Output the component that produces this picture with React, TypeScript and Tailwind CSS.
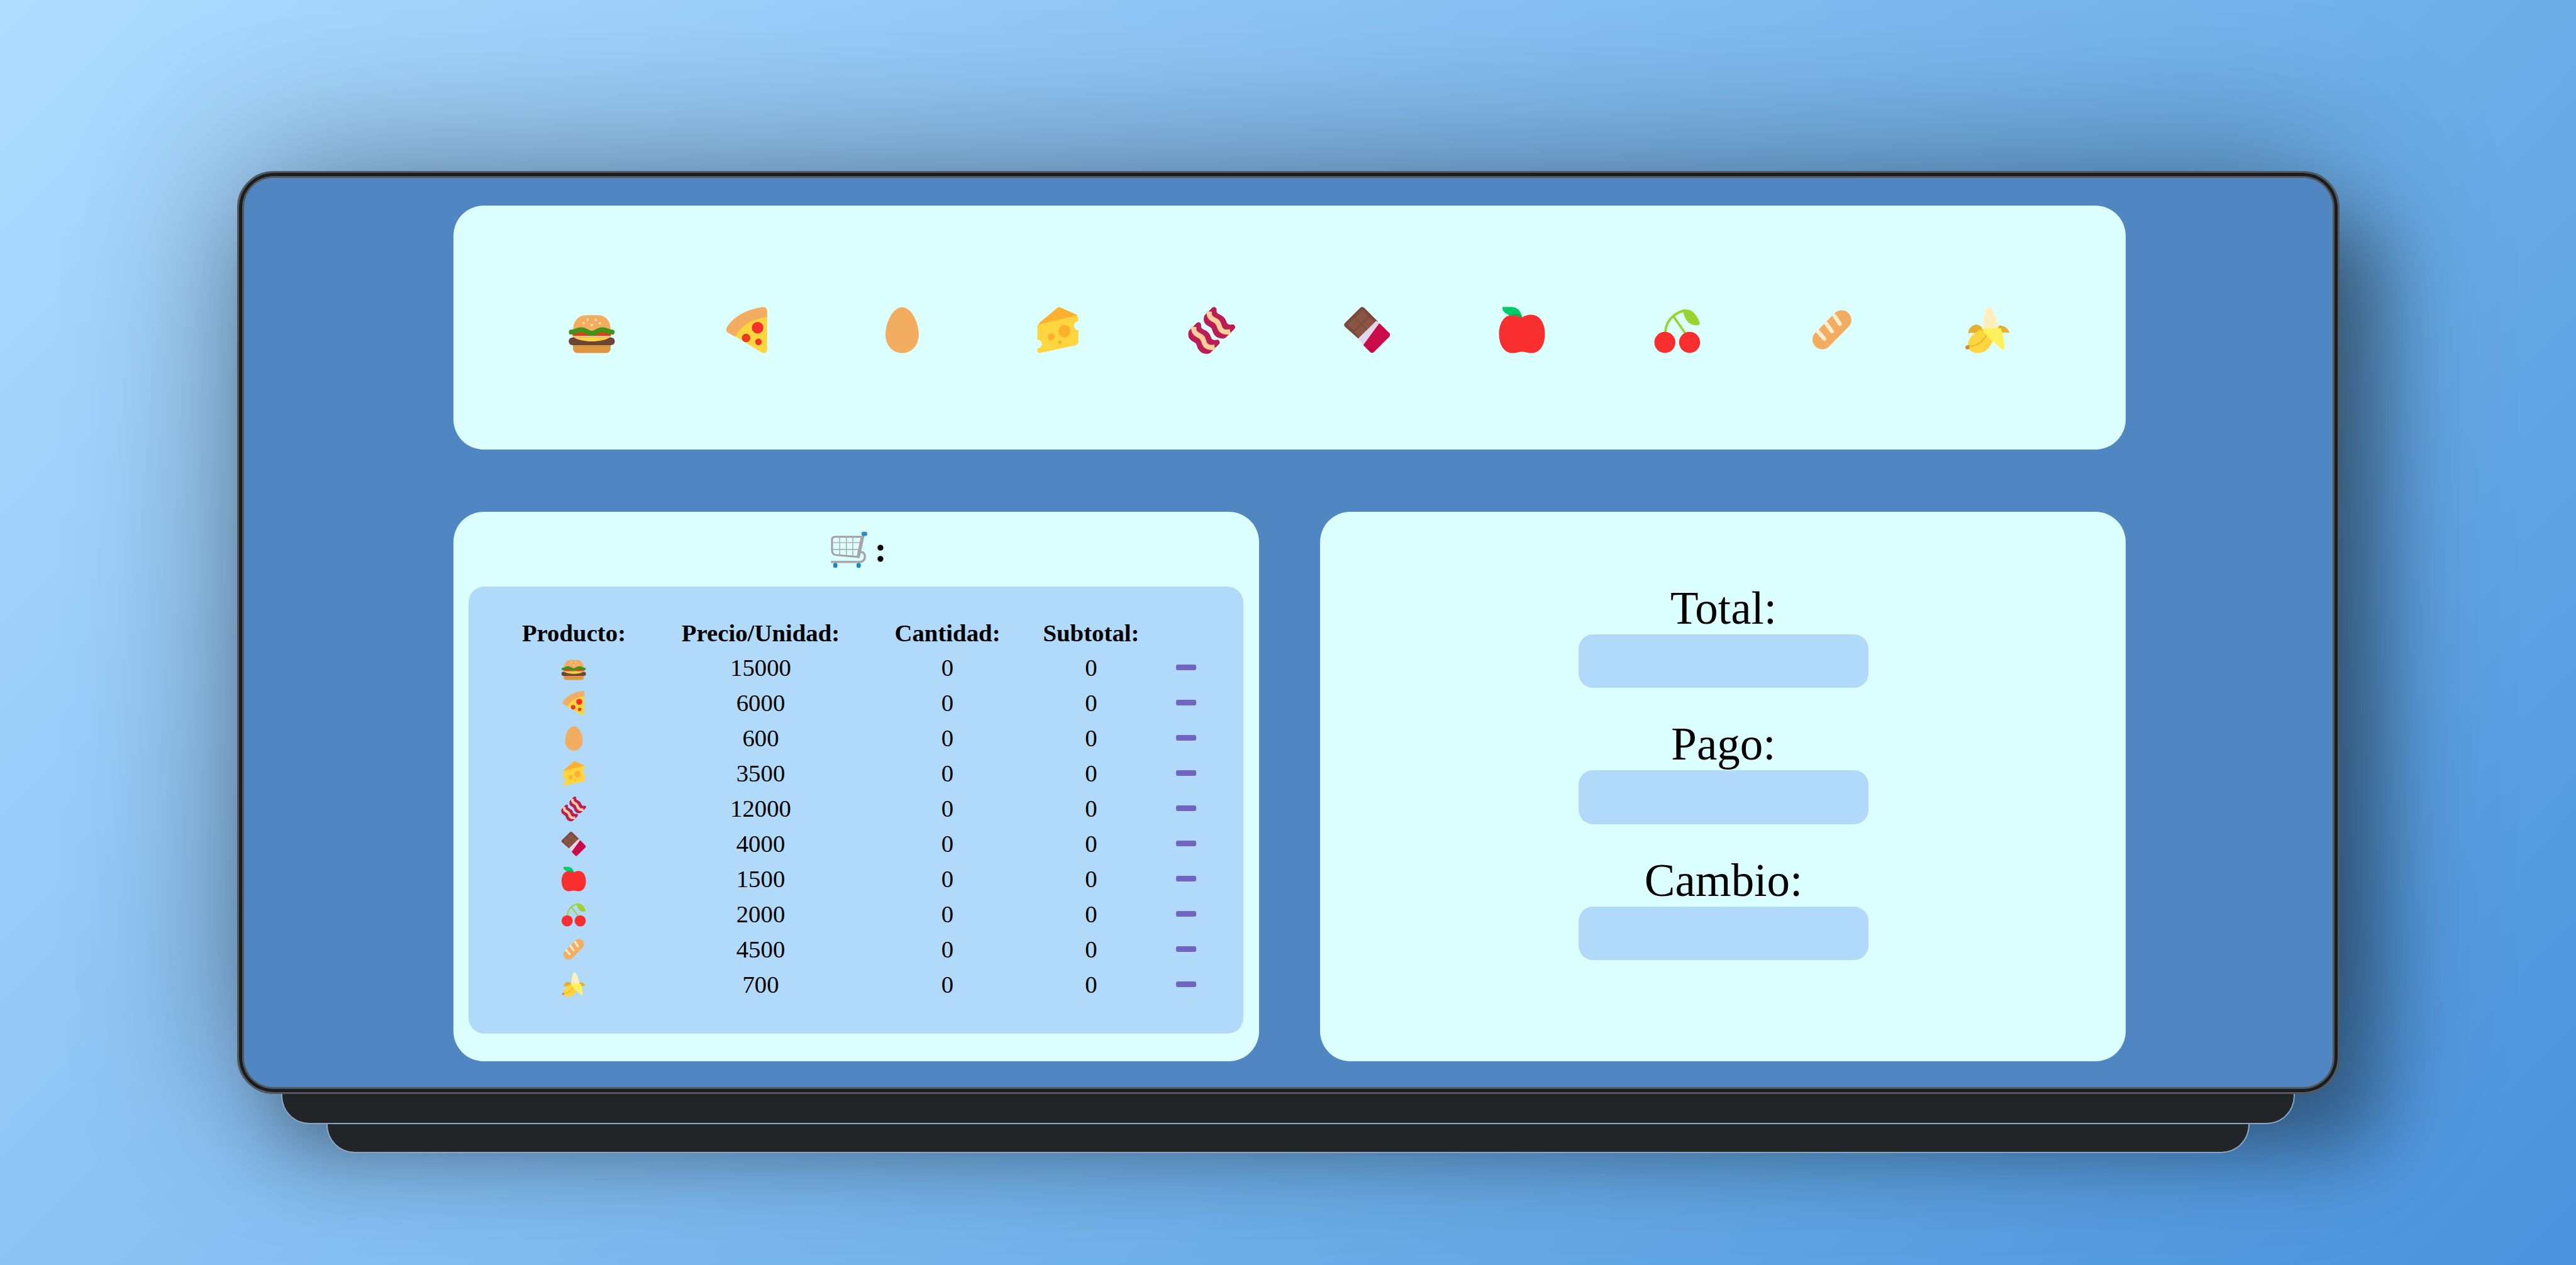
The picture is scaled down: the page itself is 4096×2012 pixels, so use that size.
import React from "react";

type IconProps = { className?: string };

const Svg = ({ className, children }: IconProps & { children: React.ReactNode }) => (
  <svg viewBox="0 0 32 32" className={className} fill="none">
    {children}
  </svg>
);

const Burger = ({ className }: IconProps) => (
  <Svg className={className}>
    <path d="M4.6 24.5H27.5V26.9C27.5 28.6 26.4 30 24.6 30H7.5C5.7 30 4.6 28.6 4.6 26.9Z" fill="#DE9542" />
    <path d="M4.7 15.5C4.7 10.4 8.2 7 12.8 7H19.6C24.2 7 27.5 10.4 27.5 15.5L16 19Z" fill="#F3AD61" />
    <rect x="4.4" y="16.5" width="23.2" height="3.6" fill="#D3451C" />
    <path d="M4.4 19.6H27.6V21.5H4.4Z" fill="#F9C9A0" />
    <rect x="2" y="20.5" width="28" height="4.7" rx="2.3" fill="#6D4534" />
    <path d="M5.3 20.5H26.8C24.5 22 20.6 22.9 16 22.9C11.5 22.9 7.6 22 5.3 20.5Z" fill="#FCD53F" />
    <path
      d="M3.6 17.3C6 17.3 6.5 15.8 9.6 15.8C12.6 15.8 13.3 18 16 18C18.7 18 19.4 15.8 22.4 15.8C25.5 15.8 26 17.3 28.4 17.3"
      stroke="#44911B"
      strokeWidth="3"
      strokeLinecap="round"
    />
    <g fill="#FFDEA7">
      <ellipse cx="13.5" cy="9.8" rx="0.7" ry="0.8" />
      <ellipse cx="18.4" cy="9.8" rx="0.7" ry="0.8" />
      <ellipse cx="11" cy="11.9" rx="0.7" ry="0.8" />
      <ellipse cx="20.9" cy="11.9" rx="0.7" ry="0.8" />
      <ellipse cx="16" cy="13" rx="0.7" ry="0.9" />
    </g>
  </Svg>
);

const Pizza = ({ className }: IconProps) => (
  <Svg className={className}>
    <path d="M8 19.4C11 13.8 18 8.8 28.2 7.8V27.8C28.2 29.7 26.3 30.6 24.7 29.6Z" fill="#FCD53F" />
    <path
      d="M25 2.1C26.8 1.8 28.2 2.9 28.2 4.6V8.1C19.5 9.2 12 13.3 8.8 20.1L4.5 17.7C3.4 17 3 15.8 3.6 14.6C7 8.3 15.6 3.4 25 2.1Z"
      fill="#F3AD61"
    />
    <circle cx="22.4" cy="14.6" r="3.5" fill="#F92F2F" />
    <circle cx="15.4" cy="20.8" r="2.6" fill="#E93B22" />
    <circle cx="22.9" cy="23.2" r="2" fill="#E93B22" />
  </Svg>
);

const Egg = ({ className }: IconProps) => (
  <Svg className={className}>
    <path d="M16.2 2.1C21.8 2.1 26.3 11.4 26.3 18.7C26.3 25.4 21.9 30 16.2 30C10.5 30 6.1 25.4 6.1 18.7C6.1 11.4 10.6 2.1 16.2 2.1Z" fill="#F3AD61" />
  </Svg>
);

const Cheese = ({ className }: IconProps) => (
  <Svg className={className}>
    <path d="M16.2 2.5C16.8 2 17.5 2 18.2 2.4L27.8 6.6L28.5 8.6L4.2 14.2L5 11.8Z" fill="#FFB02E" />
    <path
      d="M4 12.9L28 7.2C28.6 7.8 28.9 8.4 28.9 9.2V10.6C27.2 10.8 26.2 12.2 26.2 13.5C26.2 14.9 27.3 16 28.9 16.2V23C28.9 24.2 28.2 25 27.1 25.3L5.7 29.9C4.7 30.1 3.9 29.5 3.9 28.5V27.2C5.5 27 6.8 25.9 6.8 24.5C6.8 22.9 5.6 22 3.9 21.8Z"
      fill="#FCD53F"
    />
    <ellipse cx="20.4" cy="16.7" rx="3.6" ry="3.8" fill="#FFB02E" />
    <circle cx="12.4" cy="20.1" r="2.2" fill="#FFB02E" />
    <circle cx="17.7" cy="23.4" r="1.1" fill="#FFB02E" />
  </Svg>
);

const BaconStrip = ({ shift }: { shift: string }) => (
  <g transform={shift} strokeLinejoin="round">
    <path
      d="M17.3 3.6C16.9 6.6 18.7 7.4 20.7 8.3C23.2 9.5 22.9 10.8 23.7 12.4C24.7 14.4 26.6 14.6 28.6 14.2L23.4 19.4C21.3 19.9 19.3 19.1 18.3 17.1C17.4 15.2 17.9 13.9 15.4 12.7C13.6 11.8 12 10.8 12.9 8Z"
      fill="#BB1D54"
      stroke="#BB1D54"
      strokeWidth="3.2"
    />
    <path d="M14.5 4.7C14 8.2 16 9.2 18 10.2C20.3 11.3 20 12.6 20.9 14.7C21.9 17 24 17.7 27.2 17" stroke="#FFCE9B" strokeWidth="3.1" />
  </g>
);

const Bacon = ({ className }: IconProps) => (
  <Svg className={className}>
    <BaconStrip shift="translate(0 0)" />
    <BaconStrip shift="translate(-9.4 9.3)" />
  </Svg>
);

const Chocolate = ({ className }: IconProps) => (
  <Svg className={className}>
    <path d="M11.8 2.5Q13 1.5 14.2 2.5L22.6 10.9L10.9 21.5L2.5 14Q1.4 12.8 2.5 11.7Z" fill="#7A4B3A" />
    <g fill="#8C5543" transform="rotate(45 13 2.2)">
      <rect x="14.2" y="3.3" width="5.2" height="6" />
      <rect x="20.2" y="3.3" width="5" height="6" />
      <rect x="14.2" y="10" width="5.2" height="6" />
      <rect x="20.2" y="10" width="5" height="6" />
    </g>
    <path d="M21.5 10.4L23.8 12L14.2 25.4L10.3 21.4Z" fill="#E1D8EC" />
    <path d="M23.4 11.8L29.4 17.8Q30.4 19 29.4 20.1L20.1 29.4Q18.9 30.4 17.8 29.4L13.6 25.2Z" fill="#CA0B4A" />
  </Svg>
);

const Apple = ({ className }: IconProps) => (
  <Svg className={className}>
    <path
      d="M16.1 8.3C17.6 7.4 19.6 6.7 21.6 6.7C26.6 6.7 30 11.5 30 18.4C30 25 26.9 30 22 30C19.6 30 18.2 29.2 16.1 29.2C14 29.2 12.6 30 10.2 30C5.3 30 2.1 25 2.1 18.4C2.1 11.5 5.5 6.7 10.6 6.7C12.6 6.7 14.6 7.4 16.1 8.3Z"
      fill="#F92F2F"
    />
    <path d="M4.7 2H9.6C13.2 2 16 4.8 16 8.6C13.8 7.6 11.3 7 9 7.2C6.4 6.4 4.2 4.8 4.2 2.5C4.2 2.2 4.4 2 4.7 2Z" fill="#00CB6A" />
    <path d="M9 7.2C11.6 6.3 14.3 7.1 16 8.6L15.9 7.6C14 6 11.2 5.8 9 7.2Z" fill="#2E8F45" />
  </Svg>
);

const Cherries = ({ className }: IconProps) => (
  <Svg className={className}>
    <path d="M8.8 17.5C9 11.5 12.6 6.2 20.4 4.1" stroke="#9BD22B" strokeWidth="1.5" strokeLinecap="round" />
    <path d="M14 8.2C15.8 10.8 18.4 14.2 20.6 17.6" stroke="#9BD22B" strokeWidth="1.4" strokeLinecap="round" />
    <path d="M19.4 3.8C24.8 2.6 27.6 6.4 29.5 11.3C29.9 12.4 29.2 13.1 28 13.1C22.4 13.1 20.4 9.3 19.4 3.8Z" fill="#9BD22B" />
    <circle cx="8.5" cy="23.5" r="6.4" fill="#F92F2F" />
    <circle cx="23.5" cy="23.5" r="6.4" fill="#F92F2F" />
  </Svg>
);

const Bread = ({ className }: IconProps) => (
  <Svg className={className}>
    <path d="M10.1 21.8L21.9 9.9" stroke="#F3AD61" strokeWidth="11.8" strokeLinecap="round" />
    <g stroke="#FFEFD0" strokeWidth="2.4" strokeLinecap="round">
      <path d="M17.6 7.4L20.8 12.3" />
      <path d="M12.6 12.2L16 16.8" />
      <path d="M7.6 17L11.4 21.3" />
    </g>
  </Svg>
);

const Banana = ({ className }: IconProps) => (
  <Svg className={className}>
    <path d="M15.2 3.4C15.9 1.5 18.2 1.5 19 3.4C20.8 7 22.3 11 22.8 15.6L18 18L13.6 15.4C13.4 11 13.8 7 15.2 3.4Z" fill="#FFEFBE" />
    <path d="M9.8 12.7C12.3 13.4 14.2 15.6 15.4 18.4L9 18C7.6 17.5 6 17.5 4.6 18.1C4 15.8 6.6 12.7 9.8 12.7Z" fill="#E5B02F" />
    <path d="M23.2 13.2C26.4 13.4 28.9 15 29.5 17.8C27.8 17.4 26 17.3 24.2 18.2L22 15.6Z" fill="#E5B02F" />
    <path d="M4.4 23.6C5.2 20.8 8.4 17.2 11.8 15.8L20 20.6C18.8 25 16 30 10 30C6.6 30 3.2 27.4 4.4 23.6Z" fill="#FCD53F" />
    <path d="M5.2 25.8C9 26 14 23.3 15.6 18.4" stroke="#EDB92E" strokeWidth="0.9" strokeLinecap="round" />
    <path d="M3.2 25.4L5 25.2L5.2 27.6L3.4 27.8C2.5 27.2 2.4 26.2 3.2 25.4Z" fill="#C98A4B" />
    <path d="M12.4 14.9H24.2C25.6 18.4 26.6 23 26.4 27.4C26.3 28.2 25.4 28.4 24.8 27.8C20 23 15.4 20 12.4 14.9Z" fill="#FFF15C" />
  </Svg>
);

const Minus = () => <div className="h-[8.5px] w-[32px] rounded-[3px] bg-[#7264C1]" />;

const Cart = () => (
  <svg viewBox="25 37.5 200 200" className="h-[66.2px] w-[66.2px]" fill="none">
    <g stroke="#B0B0B4" strokeWidth="5">
      <path d="M80 77V166" />
      <path d="M112 77V168" />
      <path d="M143 77V170" />
      <path d="M44 104H178" />
      <path d="M44 137H172" />
    </g>
    <path d="M198 76H58C48 76 43 81 43 90V140C43 157 51 163 66 164L166 173" stroke="#A3A0A3" strokeWidth="9" strokeLinejoin="round" />
    <path d="M190 74L168 178" stroke="#A8A3A6" strokeWidth="16" />
    <path d="M178 150C194 148 201 158 201 170C201 188 191 197 176 197H38" stroke="#AAA7AA" strokeWidth="11" />
    <rect x="185" y="52" width="27" height="20" rx="8" fill="#2C8FC4" />
    <rect x="49" y="202" width="20" height="23" rx="7" fill="#1F85BC" />
    <rect x="161" y="202" width="20" height="23" rx="7" fill="#1F85BC" />
  </svg>
);

const products = [
  { Icon: Burger, price: 15000 },
  { Icon: Pizza, price: 6000 },
  { Icon: Egg, price: 600 },
  { Icon: Cheese, price: 3500 },
  { Icon: Bacon, price: 12000 },
  { Icon: Chocolate, price: 4000 },
  { Icon: Apple, price: 1500 },
  { Icon: Cherries, price: 2000 },
  { Icon: Bread, price: 4500 },
  { Icon: Banana, price: 700 },
];

const columns = "grid grid-cols-[297px_297px_297px_160px_141px] items-center justify-items-center";

export default function App() {
  return (
    <div className="flex h-[2012px] w-[4096px] flex-col items-center overflow-hidden bg-[linear-gradient(135deg,#aedcff_0%,#8bc2f4_36%,#6aace7_68%,#4a92dc_100%)] pt-[272px] font-['Liberation_Serif','Times_New_Roman',serif] text-black">
      <main className="flex h-[1468px] w-[3343px] shrink-0 flex-col gap-[98.5px] rounded-[58px] border-[3px] border-[#55585b] bg-[#5086c2] pt-[51.5px] pl-[341px] shadow-[inset_0_0_0_5px_#181d21,inset_0_0_0_8px_#55585b,0_0_300px_rgba(0,0,0,0.42),65px_90px_120px_rgba(0,0,0,0.32)]">
        <section className="flex h-[388.5px] w-[2659.5px] items-center justify-center rounded-[48px] bg-[#dcffff] pt-[8.5px]">
          {products.map(({ Icon }, i) => (
            <button key={i} className="flex w-[246.5px] justify-center">
              <Icon className="h-[83.8px] w-[83.8px]" />
            </button>
          ))}
        </section>

        <div className="flex w-[2659.5px] justify-between">
          <section className="flex h-[874.5px] w-[1281px] flex-col items-center rounded-[48px] bg-[#dcffff]">
            <h2 className="flex h-[119.5px] items-center gap-[7px] pt-[1px] pl-[5px] text-[58px] leading-none font-bold">
              <Cart />
              <span>:</span>
            </h2>
            <div className="h-[710.5px] w-[1232px] rounded-[25px] bg-[#b1d9fa] pt-[45px] pl-[19px] text-[38.8px]">
              <div className={`${columns} h-[55.5px] font-bold`}>
                <span>Producto:</span>
                <span>Precio/Unidad:</span>
                <span>Cantidad:</span>
                <span>Subtotal:</span>
              </div>
              {products.map(({ Icon, price }, i) => (
                <div key={i} className={`${columns} h-[56px] leading-[56px]`}>
                  <Icon className="mt-[2px] h-[44.4px] w-[44.4px]" />
                  <span>{price}</span>
                  <span>0</span>
                  <span>0</span>
                  <Minus />
                </div>
              ))}
            </div>
          </section>

          <section className="flex h-[874.5px] w-[1281px] flex-col items-center gap-[48.7px] rounded-[48px] bg-[#dcffff] pt-[112px] pl-[2px]">
            {["Total:", "Pago:", "Cambio:"].map((label) => (
              <div key={label} className="flex flex-col items-center text-[73px] leading-[83px]">
                <span>{label}</span>
                <div className="h-[85.2px] w-[460.5px] rounded-[23px] bg-[#b1d9fa]" />
              </div>
            ))}
          </section>
        </div>
      </main>
      <div className="h-[48px] w-[3202px] shrink-0 rounded-b-[45px] border-x-2 border-b-2 border-[#8aa5c4] bg-[#222527]" />
      <div className="h-[45.5px] w-[3058px] shrink-0 rounded-b-[45px] border-x-2 border-b-2 border-[#8aa5c4] bg-[#222527]" />
    </div>
  );
}
